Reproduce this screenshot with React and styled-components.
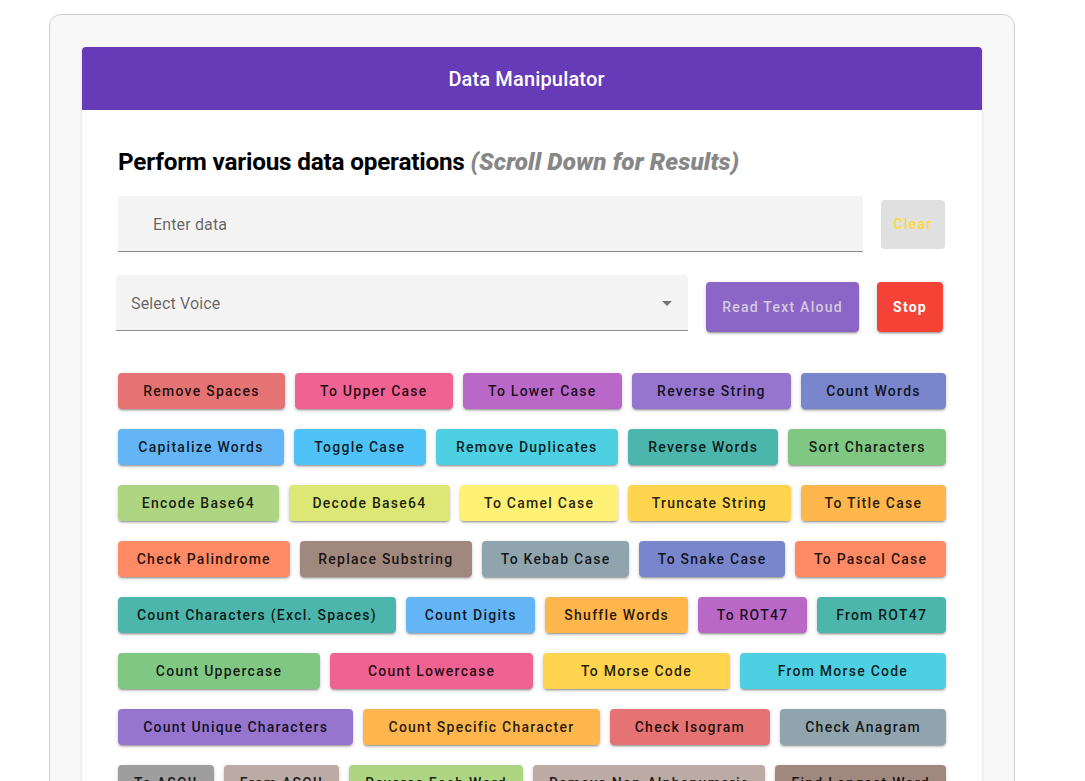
import React from "react";
import styled, { createGlobalStyle } from "styled-components";

const Global = createGlobalStyle`
  html, body { margin: 0; padding: 0; background: #ffffff; }
  body { font-family: Roboto, "Noto Sans", Arial, sans-serif; color: rgba(0,0,0,0.87); }
  * { box-sizing: border-box; }
`;

const Outer = styled.div`
  width: 966px;
  margin: 14px 0 0 49px;
  padding: 32px 32px 40px;
  background: #f8f8f8;
  border: 1px solid #cfcfcf;
  border-radius: 12px;
`;

const Card = styled.div`
  background: #ffffff;
  border-radius: 4px;
  box-shadow: 0 2px 1px -1px rgba(0,0,0,0.2), 0 1px 1px 0 rgba(0,0,0,0.14), 0 1px 3px 0 rgba(0,0,0,0.12);
  overflow: hidden;
`;

const Header = styled.div`
  height: 63px;
  background: #673ab7;
  color: #fff;
  display: flex;
  align-items: center;
  justify-content: center;
  padding-right: 11px;
  font-size: 20px;
  font-weight: 500;
  letter-spacing: 0.15px;
`;

const Body = styled.div`
  padding: 36px 36px 36px;
`;

const Title = styled.h2`
  margin: 0;
  font-size: 24.3px;
  line-height: 32px;
  font-weight: 700;
  color: #000;
  letter-spacing: -0.2px;
`;

const Hint = styled.span`
  font-style: italic;
  font-weight: 900;
  color: #878787;
  letter-spacing: 0.1px;
`;

const InputRow = styled.div`
  display: flex;
  align-items: center;
  gap: 18px;
  margin-top: 18px;
`;

const Filled = styled.div`
  flex: ${p => (p.$grow ? 1 : "none")};
  width: ${p => p.$width || "auto"};
  margin-left: ${p => p.$shift || "0px"};
  height: 56px;
  background: #f4f4f4;
  border-radius: 4px 4px 0 0;
  border-bottom: 1px solid #8c8c8c;
  display: flex;
  align-items: center;
  justify-content: space-between;
  padding: 2px 16px 0 ${p => p.$pad || "12px"};
  font-size: 16px;
  color: rgba(0,0,0,0.6);
  letter-spacing: 0.15px;
`;

const Caret = styled.span`
  width: 0;
  height: 0;
  border-left: 5px solid transparent;
  border-right: 5px solid transparent;
  border-top: 5px solid #757575;
`;

const ClearBtn = styled.button`
  width: 64px;
  height: 49px;
  border: none;
  border-radius: 4px;
  background: #e0e0e0;
  color: #fdd835;
  font-family: inherit;
  font-size: 14px;
  font-weight: 500;
  letter-spacing: 1.25px;
  margin-right: 1px;
`;

const VoiceRow = styled.div`
  display: flex;
  align-items: flex-end;
  gap: 18px;
  margin-top: 23px;
`;

const ActionBtn = styled.button`
  width: ${p => p.$width};
  height: 50px;
  border: none;
  border-radius: 4px;
  background: ${p => p.$bg};
  color: ${p => p.$fg};
  font-family: inherit;
  font-size: 14px;
  font-weight: ${p => p.$weight || 500};
  letter-spacing: 1.25px;
  box-shadow: 0 3px 1px -2px rgba(0,0,0,0.2), 0 2px 2px 0 rgba(0,0,0,0.14), 0 1px 5px 0 rgba(0,0,0,0.12);
  margin-bottom: -1px;
`;

const Ops = styled.div`
  display: flex;
  flex-direction: column;
  gap: 20px;
  margin-top: 42px;
`;

const OpRow = styled.div`
  display: flex;
  gap: 10px;
`;

const OpBtn = styled.button`
  flex: 1 1 auto;
  height: 36px;
  padding: 0 16px;
  border: none;
  border-radius: 4px;
  background: ${p => p.$bg};
  color: rgba(0,0,0,0.87);
  font-family: inherit;
  font-size: 14px;
  font-weight: 500;
  letter-spacing: 1.25px;
  white-space: nowrap;
  box-shadow: 0 3px 1px -2px rgba(0,0,0,0.2), 0 2px 2px 0 rgba(0,0,0,0.14), 0 1px 5px 0 rgba(0,0,0,0.12);
`;

const rows = [
  [["Remove Spaces", "#e57373"], ["To Upper Case", "#f06292"], ["To Lower Case", "#ba68c8"], ["Reverse String", "#9575cd"], ["Count Words", "#7986cb"]],
  [["Capitalize Words", "#64b5f6"], ["Toggle Case", "#4fc3f7"], ["Remove Duplicates", "#4dd0e1"], ["Reverse Words", "#4db6ac"], ["Sort Characters", "#81c784"]],
  [["Encode Base64", "#aed581"], ["Decode Base64", "#dce775"], ["To Camel Case", "#fff176"], ["Truncate String", "#ffd54f"], ["To Title Case", "#ffb74d"]],
  [["Check Palindrome", "#ff8a65"], ["Replace Substring", "#a1887f"], ["To Kebab Case", "#90a4ae"], ["To Snake Case", "#7986cb"], ["To Pascal Case", "#ff8a65"]],
  [["Count Characters (Excl. Spaces)", "#4db6ac"], ["Count Digits", "#64b5f6"], ["Shuffle Words", "#ffb74d"], ["To ROT47", "#ba68c8"], ["From ROT47", "#4db6ac"]],
  [["Count Uppercase", "#81c784"], ["Count Lowercase", "#f06292"], ["To Morse Code", "#ffd54f"], ["From Morse Code", "#4dd0e1"]],
  [["Count Unique Characters", "#9575cd"], ["Count Specific Character", "#ffb74d"], ["Check Isogram", "#e57373"], ["Check Anagram", "#90a4ae"]],
  [["To ASCII", "#9e9e9e"], ["From ASCII", "#bcaaa4"], ["Reverse Each Word", "#aed581"], ["Remove Non-Alphanumeric", "#bcaaa4"], ["Find Longest Word", "#a1887f"]],
];

export default function App() {
  return (
    <>
      <Global />
      <Outer>
        <Card>
          <Header>Data Manipulator</Header>
          <Body>
            <Title>
              Perform various data operations <Hint>(Scroll Down for Results)</Hint>
            </Title>
            <InputRow>
              <Filled $grow $pad="35px">Enter data</Filled>
              <ClearBtn>Clear</ClearBtn>
            </InputRow>
            <VoiceRow>
              <Filled $width="572px" $shift="-2px" $pad="15px">
                <span>Select Voice</span>
                <Caret />
              </Filled>
              <ActionBtn $width="153px" $bg="#8b66c6" $fg="#d2cadf">Read Text Aloud</ActionBtn>
              <ActionBtn $width="66px" $bg="#f44336" $fg="#ffffff" $weight={700}>Stop</ActionBtn>
            </VoiceRow>
            <Ops>
              {rows.map((r, i) => (
                <OpRow key={i}>
                  {r.map(([label, bg]) => (
                    <OpBtn key={label} $bg={bg}>{label}</OpBtn>
                  ))}
                </OpRow>
              ))}
            </Ops>
          </Body>
        </Card>
      </Outer>
    </>
  );
}
